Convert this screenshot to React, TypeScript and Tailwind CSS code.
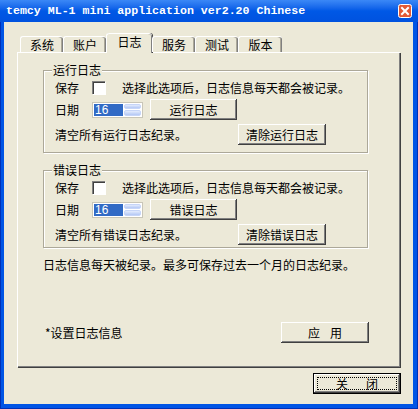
import type { ReactNode } from 'react';

// 经典风格按钮
function Btn({ children, className = '' }: { children: ReactNode; className?: string }) {
  return (
    <div
      className={`flex items-center justify-center h-[21px] bg-[#ECE9D8] shadow-[inset_-1px_-1px_0_#404040,inset_1px_1px_0_#FFFFFF,inset_-2px_-2px_0_#808080] text-[12px] leading-none ${className}`}
    >
      {children}
    </div>
  );
}

function CheckBox() {
  return (
    <div className="w-[13px] h-[13px] bg-white border-t border-l border-[#808080] shadow-[inset_1px_1px_0_#404040,1px_1px_0_#FFFFFF]" />
  );
}

function Spin() {
  return (
    <div className="w-[51px] h-[16px] flex bg-white border border-[#C9C6B8] p-[1px] gap-[1px]">
      <div className="flex-1 bg-[#316AC5] text-white text-[12px] leading-[12px] pl-[1px] font-['Liberation_Sans',sans-serif]">
        16
      </div>
      <div className="w-[17px] flex flex-col gap-[1px]">
        <div className="flex-1 rounded-[2px] bg-linear-to-b from-[#E4ECFD] to-[#B3C7F5] border border-[#C6D5F8]" />
        <div className="flex-1 rounded-[2px] bg-linear-to-b from-[#E4ECFD] to-[#B3C7F5] border border-[#C6D5F8]" />
      </div>
    </div>
  );
}

function Group({ title, h, btn, clear, note }: { title: string; h: string; btn: string; clear: string; note: string }) {
  return (
    <div className={`relative w-[325px] ${h} border border-[#ACA899] shadow-[1px_1px_0_#FFFFFF,inset_1px_1px_0_#FFFFFF] pl-[11px] pt-[10px]`}>
      <div className="absolute left-[8px] top-[-8px] px-[1px] bg-[#ECE9D8] text-[12px] leading-[14px]">{title}</div>
      {/* 保存 */}
      <div className="flex items-center h-[13px] text-[12px]">
        <span className="w-[37px]">保存</span>
        <CheckBox />
        <span className="ml-[17px]">选择此选项后，日志信息每天都会被记录。</span>
      </div>
      {/* 日期 */}
      <div className="flex items-center h-[21px] mt-[5px] text-[12px]">
        <span className="w-[37px]">日期</span>
        <Spin />
        <Btn className="ml-[7px] w-[87px]">{btn}</Btn>
      </div>
      {/* 清空 */}
      <div className="flex items-center h-[21px] mt-[4px] text-[12px]">
        <span className="w-[183px]">{note}</span>
        <Btn className="w-[88px]">{clear}</Btn>
      </div>
    </div>
  );
}

const tabs = ['系统', '账户', '日志', '服务', '测试', '版本'];

export default function App() {
  return (
    <div className="w-[418px] h-[409px] flex flex-col bg-[#0055E5] shadow-[inset_1px_0_0_#0030B8,inset_-1px_0_0_#0030B8,inset_0_-1px_0_#0030B8] font-['Noto_Sans_CJK_SC',sans-serif] text-black select-none">
      {/* 标题栏 */}
      <div className="h-[22px] flex items-center pl-[6px] pr-[6px] bg-linear-to-b from-[#3B88F6] via-[#0058E6] to-[#0052DF]">
        <span className="flex-1 text-white font-bold text-[11.6px] leading-none font-['Liberation_Mono',monospace] whitespace-pre">
          temcy ML-1 mini application ver2.20 Chinese
        </span>
        <svg width="14" height="14" viewBox="0 0 14 14">
          <rect x="0.5" y="0.5" width="13" height="13" rx="2" fill="#E25A36" stroke="#FFFFFF" />
          <path d="M4 4 L10 10 M10 4 L4 10" stroke="#FFFFFF" strokeWidth="2" strokeLinecap="square" />
        </svg>
      </div>

      {/* 客户区 */}
      <div className="flex-1 ml-[4px] mr-[5px] mb-[5px] bg-[#ECE9D8] flex flex-col px-[13px] pt-[11px]">
        {/* 选项卡 */}
        <div className="relative z-10 flex items-end h-[19px] pl-[3px]">
          {tabs.map((t) =>
            t === '日志' ? (
              <div
                key={t}
                className="w-[46px] h-[20px] -mb-[1px] pb-[3px] flex items-center justify-center bg-[#ECE9D8] rounded-t-[3px] border-t border-l border-white shadow-[inset_-1px_0_0_#808080,1px_0_0_#404040] text-[12px]"
              >
                {t}
              </div>
            ) : (
              <div
                key={t}
                className={`${t === '版本' ? 'w-[44px]' : 'w-[43px]'} h-[16px] flex items-center justify-center rounded-t-[3px] border-t border-l border-white shadow-[inset_-1px_0_0_#808080,inset_-2px_0_0_#ACA899] text-[12px]`}
              >
                {t}
              </div>
            )
          )}
        </div>

        {/* 选项卡面板 */}
        <div className="h-[315px] border-t border-l border-white shadow-[inset_-1px_-1px_0_#808080,1px_1px_0_#404040] pl-[25px] pt-[17px] flex flex-col">
          <Group title="运行日志" h="h-[83px]" btn="运行日志" clear="清除运行日志" note="清空所有运行日志纪录。" />
          <div className="mt-[17px]">
            <Group title="错误日志" h="h-[78px]" btn="错误日志" clear="清除错误日志" note="清空所有错误日志纪录。" />
          </div>
          <div className="mt-[10px] text-[12px] leading-[14px]">日志信息每天被纪录。最多可保存过去一个月的日志纪录。</div>
          <div className="mt-[50px] flex items-center h-[21px] text-[12px]">
            <span className="w-[238px] pl-[2px]">*设置日志信息</span>
            <Btn className="w-[88px] gap-[10px]">
              <span>应</span>
              <span>用</span>
            </Btn>
          </div>
        </div>

        {/* 关闭 */}
        <div className="self-end -mr-[1px] mt-[6px] w-[88px] h-[21px] border border-black">
          <Btn className="w-full h-full">
            <div className="w-[80px] h-[13px] border border-dotted border-black flex items-center justify-center gap-[18px]">
              <span>关</span>
              <span>闭</span>
            </div>
          </Btn>
        </div>
      </div>
    </div>
  );
}
